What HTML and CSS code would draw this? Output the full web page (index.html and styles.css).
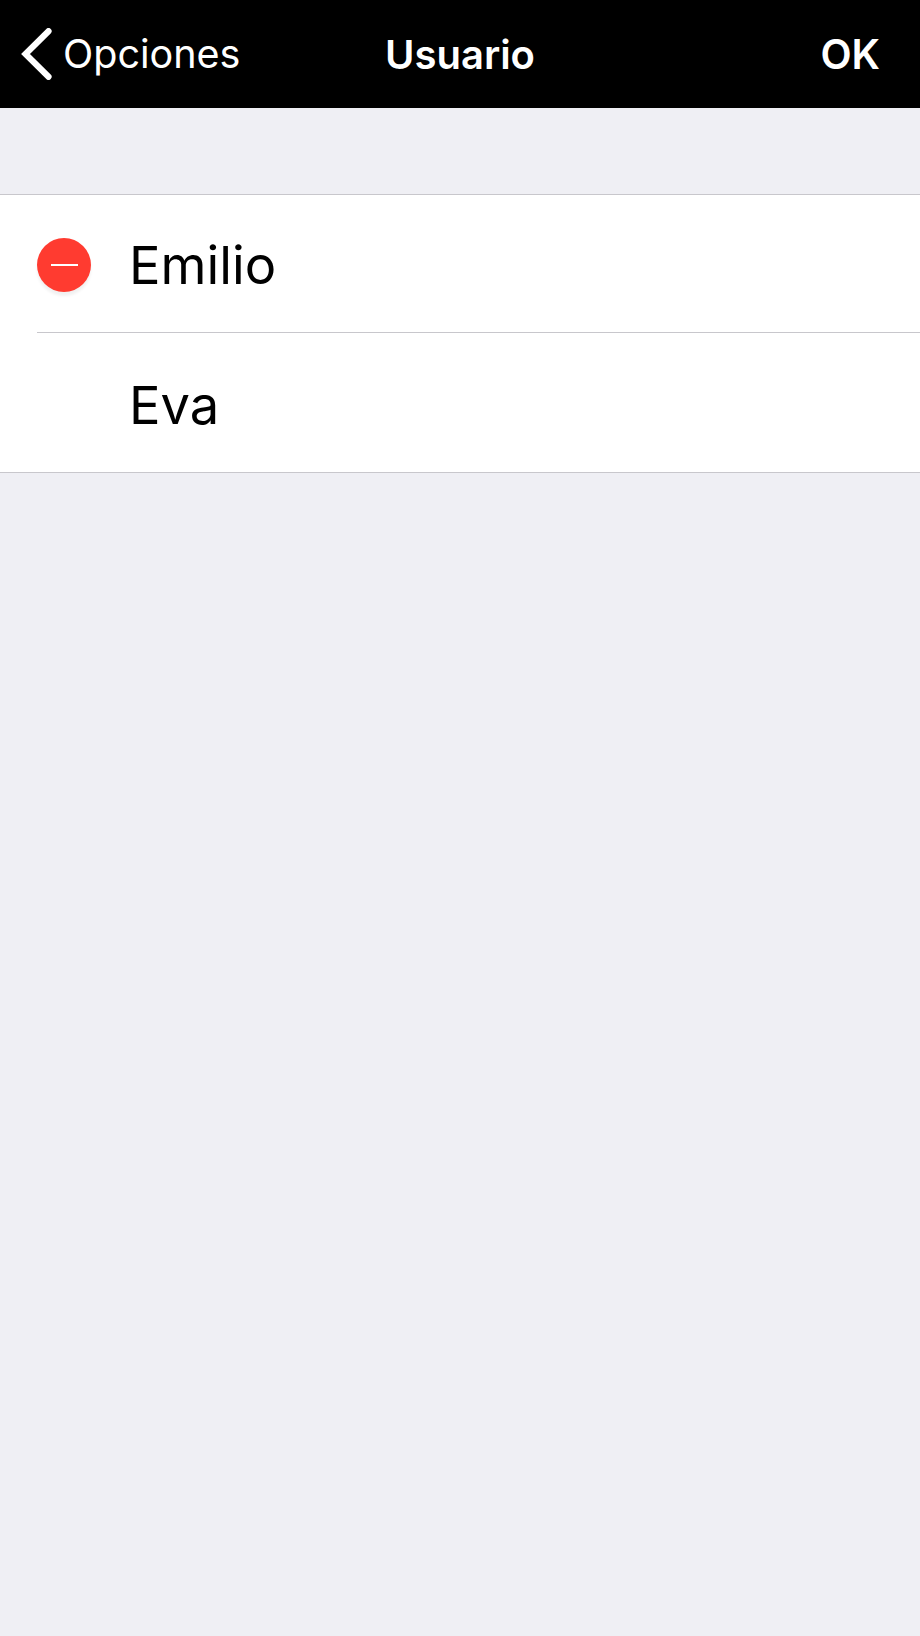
FILE: index.html
```html
<!DOCTYPE html>
<html lang="es">
<head>
    <meta charset="UTF-8">
    <meta name="viewport" content="width=device-width, initial-scale=1.0">
    <title>Usuario</title>
    <link rel="stylesheet" href="styles.css">
</head>

<body>
    <header class="nav-bar">
        <a class="nav-back" href="#">
            <svg class="back-icon" viewBox="0 0 32 52" width="32" height="52" aria-hidden="true">
                <path d="M27.5 3.2 L4.5 26 L27.5 48.8" fill="none" stroke="#fff" stroke-width="6.2" stroke-linecap="round" stroke-linejoin="miter"/>
            </svg>
            <span>Opciones</span>
        </a>
        <h1 class="nav-title">Usuario</h1>
        <a class="nav-ok" href="#">OK</a>
    </header>

    <ul class="user-list">
        <li class="user-row user-row-first">
            <span class="delete-badge"><span class="delete-dash"></span></span>
            <span class="user-name">Emilio</span>
        </li>
        <li class="user-row user-row-last">
            <span class="user-name">Eva</span>
        </li>
    </ul>
</body>
</html>
```

FILE: styles.css
```css
* {
    box-sizing: border-box;
    margin: 0;
    padding: 0;
}

html, body {
    height: 100%;
}

body {
    font-family: "Inter", "Liberation Sans", sans-serif;
    background-color: #efeff4;
    color: #000;
    overflow: hidden;
}

.nav-bar {
    display: grid;
    grid-template-columns: 1fr auto 1fr;
    align-items: center;
    height: 108px;
    padding: 0 21px;
    background-color: #000;
    color: #fff;
}

.nav-back {
    display: flex;
    align-items: center;
    gap: 10px;
    color: #fff;
    text-decoration: none;
    font-size: 39.5px;
    font-weight: 400;
}

.back-icon {
    flex: none;
}

.nav-title {
    font-size: 40px;
    font-weight: 600;
}

.nav-ok {
    justify-self: end;
    margin-right: 19px;
    color: #fff;
    text-decoration: none;
    font-size: 40.5px;
    font-weight: 600;
}

.user-list {
    list-style: none;
    margin-top: 86px;
    background-color: #fff;
    border-top: 1px solid #c8c7cc;
    border-bottom: 1px solid #c8c7cc;
}

.user-row {
    position: relative;
    display: flex;
    align-items: center;
    padding-left: 129px;
}

.user-row-first {
    height: 137px;
    padding-top: 2px;
}

.user-row-last {
    height: 140px;
    padding-top: 5px;
}

.user-row-last::before {
    content: "";
    position: absolute;
    top: 0;
    left: 37px;
    right: 0;
    border-top: 1px solid #c8c7cc;
}

.delete-badge {
    position: absolute;
    left: 37px;
    top: 43px;
    display: flex;
    align-items: center;
    justify-content: center;
    width: 54px;
    height: 54px;
    border-radius: 50%;
    background-color: #ff3b30;
    box-shadow: 0 4px 3px rgba(0, 0, 0, 0.06);
}

.delete-dash {
    width: 27px;
    height: 2px;
    background-color: #fff;
}

.user-name {
    font-size: 52.5px;
    font-weight: 400;
}
```
